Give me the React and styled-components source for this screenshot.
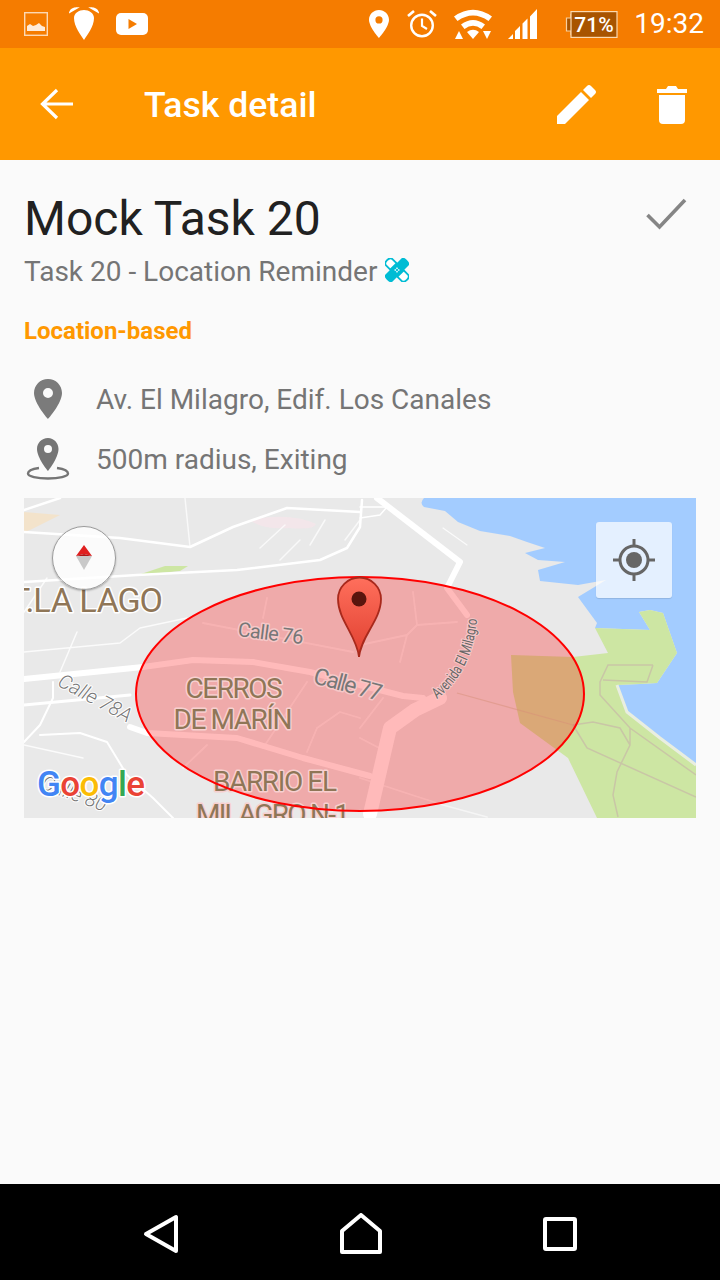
import React from "react";
import styled, { createGlobalStyle } from "styled-components";

const Global = createGlobalStyle`
  html, body { margin: 0; padding: 0; background: #fafafa; }
  * { box-sizing: border-box; }
  body { font-family: Roboto, "Noto Sans", sans-serif; }
`;

const Screen = styled.div`
  width: 720px; height: 1280px; display: flex; flex-direction: column; overflow: hidden; background: #fafafa;
`;
const StatusBar = styled.div`
  height: 48px; flex: none; background: #f57c00; display: flex; align-items: center; justify-content: space-between; color: #fff;
`;
const StatusGroup = styled.div`
  display: flex; align-items: center; gap: ${p => p.$gap}px; padding: ${p => p.$pad};
`;
const Glyph = styled.svg`
  display: block; flex: none; margin-left: ${p => p.$ml || 0}px;
`;
const Clock = styled.span`
  font-size: 28px; line-height: 48px; margin-left: 16px; letter-spacing: 0;
`;
const Toolbar = styled.header`
  height: 112px; flex: none; background: #ff9800; display: flex; align-items: center; color: #fff; padding: 0 32px 0 40px;
`;
const ToolTitle = styled.h1`
  font-size: 35.6px; font-weight: 500; margin: 4px 0 0 70px; flex: 1; line-height: 1; letter-spacing: 0;
`;
const ToolIcon = styled.svg`
  display: block; flex: none; margin-right: ${p => p.$mr || 0}px;
`;
const Content = styled.main`
  flex: 1; padding: 26px 24px 0; display: flex; flex-direction: column;
`;
const TitleRow = styled.div`
  display: flex; justify-content: space-between; align-items: flex-start; height: 64px;
`;
const Title = styled.h2`
  font-size: 48px; font-weight: 400; line-height: 66px; margin: 0; color: #212121;
`;
const Check = styled.svg`
  display: block; margin: 6px 8px 0 0;
`;
const Subtitle = styled.div`
  display: flex; align-items: center; gap: 8px; height: 40px; margin-top: 1px; font-size: 28px; color: #757575;
`;
const Category = styled.div`
  font-size: 24px; font-weight: 700; color: #ff9800; line-height: 32px; margin-top: 24px;
`;
const InfoRow = styled.div`
  display: flex; align-items: center; height: 60px; font-size: 28px; color: #757575;
  margin-top: ${p => p.$mt || 0}px;
`;
const InfoIcon = styled.div`
  width: 48px; flex: none; display: flex; justify-content: center; margin-right: 24px;
`;
const MapBox = styled.section`
  position: relative; width: 672px; height: 320px; margin-top: 9px; overflow: hidden; background: #e9e9e9;
`;
const MapArt = styled.svg`
  display: block; width: 672px; height: 320px;
  text { font-family: Roboto, sans-serif; paint-order: stroke; stroke-linejoin: round; }
`;
const Compass = styled.div`
  position: absolute; left: 28px; top: 28px; width: 64px; height: 64px; border-radius: 50%;
  background: rgba(255,255,255,.82); border: 1px solid #9b9b9b; box-shadow: 0 1px 2px rgba(0,0,0,.3);
  display: flex; align-items: center; justify-content: center;
`;
const Locate = styled.div`
  position: absolute; left: 572px; top: 24px; width: 76px; height: 76px; border-radius: 3px;
  background: rgba(255,255,255,.7); box-shadow: 0 1px 1px rgba(0,0,0,.12);
  display: flex; align-items: center; justify-content: center;
`;
const NavBar = styled.nav`
  height: 96px; flex: none; background: #000; display: flex; align-items: center; justify-content: center; gap: 161px; padding-top: 4px;
`;

const PIN = "M12 2C8.1 2 5 5.1 5 9c0 5.2 7 13 7 13s7-7.8 7-13c0-3.9-3.1-7-7-7zm0 9.5A2.5 2.5 0 1 1 12 6.5a2.5 2.5 0 0 1 0 5z";

const road = (d, w = 3, o = 1) => <path key={d} d={d} fill="none" stroke="#fff" strokeWidth={w} strokeOpacity={o} strokeLinejoin="round" strokeLinecap="round" />;

const MapDrawing = () => (
  <MapArt viewBox="24 498 672 320">
    <rect x="24" y="498" width="672" height="320" fill="#e9e9e9" />
    <path d="M24 512L60 515L30 530L24 532Z" fill="#f3e3cb" />
    <path d="M250 520Q290 512 316 524Q314 530 290 528Q262 530 250 520Z" fill="#f3e6ea" />
    <path d="M138 575L165 566H188L180 571Z" fill="#cde6a3" />
    <path d="M424 498Q419 503 424 507L445 511L458 522L480 531L510 536L527 542L545 548L525 553L538 560L565 562L538 570L540 581L578 585L606 580L578 597L597 623L595 628L650 630L639 612L650 610L663 613L677 653L657 683L640 684L617 685L627 712L660 738L696 765V498Z" fill="#a3ccff" />
    <path d="M595 628L650 630L639 612L650 610L663 613L677 653L657 683L640 684L617 685L627 712L660 738L696 765V818H597L568 758L520 723L513 692L511 655L573 657L608 653Z" fill="#cde6a3" />
    <path d="M653 665L608 665L600 682V695L630 728L696 775M653 665L647 682L603 680M630 728V745L617 772L613 795L618 817M573 725L587 748L696 797M573 725L593 722L620 728L630 745" fill="none" stroke="#c9c6a6" strokeWidth="1.500" />
    <path d="M457 693L573 725" fill="none" stroke="#c9c6a6" strokeWidth="1.200" strokeOpacity="0.5" />
    <path d="M617 685L627 712L660 738L696 765" fill="none" stroke="#e9eee0" strokeWidth="3" />
    {road("M24 679L143 667L193 660L253 662L310 672L360 685L403 696L423 698", 6)}
    {road("M24 705L130 695", 3)}
    {road("M130 727L147 733L237 738L303 758L370 776", 6)}
    {road("M370 814L390 728L415 710L440 698", 14)}
    {road("M377 498L460 562L447 588L467 615", 6)}
    {road("M24 532L120 538L190 547L233 527L287 508L360 512", 2.500)}
    {road("M24 510L60 498", 2.500)}
    {road("M24 582L137 575L237 570L320 560L347 548L360 527L362 500", 2.500)}
    {road("M360 518L380 515L387 507L360 507", 1.500)}
    {road("M77 632L60 672M24 612L47 578M24 652L120 643L140 628L187 618", 1.500, 0.8)}
    {road("M53 682V698L40 725L24 742", 2)}
    {road("M40 735L80 733L107 742L127 775L153 798L173 818", 2)}
    {road("M24 745L83 758", 1.500, 0.8)}
    {road("M190 547L185 498M260 548L285 525M280 560L300 540M310 545L325 520M345 540L360 520", 1.500, 0.7)}
    {road("M443 528L467 545", 1.200, 0.8)}
    {road("M267 598L263 618M203 623L353 652M307 682L263 748M317 728L340 712L360 718M307 752L317 728M207 745L183 768", 1.800, 0.55)}
    {road("M360 645L407 635L417 625L457 622M407 635L400 662M417 625L413 592M360 738L383 750M360 778L443 805L487 817M383 698L360 728", 1.800, 0.55)}
    <text x="10" y="612" fontSize="34" fill="#8f7657" stroke="#fff" strokeWidth="3" textLength="153">T.LA LAGO</text>
    <text x="92" y="704" fontSize="20" fontWeight="300" fill="#777" stroke="#fff" strokeWidth="2" textAnchor="middle" transform="rotate(28 92 704)" fontStyle="italic">Calle 78A</text>
    <text x="72" y="800" fontSize="20" fontWeight="300" fill="#777" stroke="#fff" strokeWidth="2" textAnchor="middle" transform="rotate(20 72 800)" fontStyle="italic">Calle 80</text>
    <ellipse cx="360" cy="694" rx="224" ry="117" fill="#ff0000" fillOpacity="0.27" />
    <text x="270" y="640" fontSize="20" fill="#777" stroke="#f6c8c8" strokeWidth="3" textAnchor="middle" transform="rotate(7 270 640)" textLength="66">Calle 76</text>
    <text x="346" y="692" fontSize="23" fill="#777" stroke="#f6c8c8" strokeWidth="3" textAnchor="middle" transform="rotate(15 346 692)" textLength="70">Calle 77</text>
    <path id="ave" d="M437 699Q472 672 477 620" fill="none" />
    <text fontSize="15" fill="#666" stroke="#f6c8c8" strokeWidth="2.500"><textPath href="#ave" textLength="92" lengthAdjust="spacingAndGlyphs">Avenida El Milagro</textPath></text>
    <text x="234" y="698" fontSize="28" fill="#8f7657" stroke="#f8d0d0" strokeWidth="3" textAnchor="middle" textLength="97">CERROS</text>
    <text x="233" y="729" fontSize="28" fill="#8f7657" stroke="#f8d0d0" strokeWidth="3" textAnchor="middle" textLength="119">DE MARÍN</text>
    <text x="275" y="791" fontSize="28" fill="#8f7657" stroke="#f8d0d0" strokeWidth="3" textAnchor="middle" textLength="124">BARRIO EL</text>
    <text x="273" y="824" fontSize="28" fill="#8f7657" stroke="#f8d0d0" strokeWidth="3" textAnchor="middle" textLength="154">MILAGRO N-1</text>
    <ellipse cx="360" cy="694" rx="224" ry="117" fill="none" stroke="#f00" strokeWidth="2" />
    <defs>
      <linearGradient id="pinfill" x1="0" y1="0" x2="0" y2="1">
        <stop offset="0" stopColor="#ff6f5c" />
        <stop offset="1" stopColor="#e04030" />
      </linearGradient>
    </defs>
    <path d="M359 657C357 636 338 620 338 599A21.500 21.500 0 0 1 381 599C381 620 361 636 359 657Z" fill="url(#pinfill)" stroke="#a8291c" strokeWidth="1.800" />
    <circle cx="359" cy="599" r="7.500" fill="#5a150d" />
    <text x="37" y="796" fontSize="35" fontWeight="500" stroke="#fff" strokeWidth="3" textLength="108">
      <tspan fill="#4285f4">G</tspan><tspan fill="#ea4335">o</tspan><tspan fill="#fbbc05">o</tspan><tspan fill="#4285f4">g</tspan><tspan fill="#34a853">l</tspan><tspan fill="#ea4335">e</tspan>
    </text>
  </MapArt>
);

export default function App() {
  return (
    <Screen>
      <Global />
      <StatusBar>
        <StatusGroup $gap={21} $pad="0 0 0 24px">
          <Glyph width="24" height="24" viewBox="0 0 24 24">
            <rect x="0.700" y="0.700" width="22.600" height="22.600" fill="none" stroke="#fff" strokeOpacity=".7" strokeWidth="1.400" />
            <path d="M3 19V14L6 12L9 14L12 13L15 11L18 14L21 15V19Z" fill="#fff" fillOpacity=".85" />
          </Glyph>
          <Glyph width="30" height="34" viewBox="0 0 30 34">
            <path d="M15 33C12 28 5 20 5 11C5 6 10 3 15 3S25 6 25 11C25 20 18 28 15 33Z" fill="#fff" />
            <path d="M1 5C2 2 5 1 8 1L1 5ZM29 5C28 2 25 1 22 1L29 5Z" fill="#fff" stroke="#fff" strokeWidth="1.500" />
          </Glyph>
          <Glyph $ml={-4} width="32" height="22" viewBox="0 0 32 22">
            <rect x="0" y="0" width="32" height="22" rx="5" fill="#fff" />
            <path d="M12.500 6L21 11L12.500 16Z" fill="#f57c00" />
          </Glyph>
        </StatusGroup>
        <StatusGroup $gap={0} $pad="0 16px 0 0">
          <Glyph width="20" height="28" viewBox="0 0 20 28">
            <path d="M10 0C4.500 0 0 4.300 0 9.800C0 17 10 28 10 28S20 17 20 9.800C20 4.300 15.500 0 10 0ZM10 13.500A3.600 3.600 0 1 1 10 6.300A3.600 3.600 0 0 1 10 13.500Z" fill="#fff" />
          </Glyph>
          <Glyph $ml={18} width="30" height="30" viewBox="0 0 30 30" fill="none" stroke="#fff">
            <circle cx="15" cy="16.500" r="10.800" strokeWidth="2.400" />
            <path d="M15 9.500V17L20 20" strokeWidth="2.200" />
            <path d="M1 7L7 2M29 7L23 2" strokeWidth="2.600" />
          </Glyph>
          <Glyph $ml={16} width="40" height="32" viewBox="0 0 40 32">
            <path d="M1 8.500Q20 -5 39 8.500L35.500 13Q20 2 4.500 13Z" fill="#fff" />
            <path d="M8 16.500Q20 7.500 32 16.500L28.500 21Q20 14.500 11.500 21Z" fill="#fff" />
            <path d="M14 24Q20 19.500 26 24L20 31Z" fill="#fff" />
            <path d="M6 23L10 31H2Z M34 31L30 23H38Z" fill="#fff" />
          </Glyph>
          <Glyph $ml={15} width="30" height="30" viewBox="0 0 30 30">
            <path d="M0 30L5 25V30ZM7 30V22L12 17V30ZM14.500 30V14.500L19.500 9.500V30ZM22 30V7.500L29 0V30Z" fill="#fff" />
          </Glyph>
          <Glyph $ml={27} width="53" height="27" viewBox="0 0 53 27">
            <path d="M6 3V7H1.500V20H6V24" fill="#a85400" stroke="#f8cf9e" strokeWidth="1.200" />
            <rect x="6" y="0.600" width="46" height="25.800" fill="#a85400" stroke="#fbd9b0" strokeWidth="1.200" />
            <text x="29" y="20.500" fontSize="21" fontWeight="500" fill="#fff" textAnchor="middle" fontFamily="Roboto, sans-serif">71%</text>
          </Glyph>
          <Clock>19:32</Clock>
        </StatusGroup>
      </StatusBar>

      <Toolbar>
        <ToolIcon width="34" height="34" viewBox="0 0 34 34" fill="none" stroke="#fff" strokeWidth="3.200">
          <path d="M33 17H3M17 3L2.500 17L17 31" />
        </ToolIcon>
        <ToolTitle>Task detail</ToolTitle>
        <ToolIcon $mr={58} width="42" height="42" viewBox="0 0 42 42">
          <path d="M1 41V33L25 9L33 17L9 41ZM27 7L31 3Q33 1 35 3L39 7Q41 9 39 11L35 15Z" fill="#fff" />
        </ToolIcon>
        <ToolIcon width="32" height="42" viewBox="0 0 32 42">
          <path d="M1 6H10L12 3H20L22 6H31V10H1ZM3 12H29V37Q29 41 25 41H7Q3 41 3 37Z" fill="#fff" />
        </ToolIcon>
      </Toolbar>

      <Content>
        <TitleRow>
          <Title>Mock Task 20</Title>
          <Check width="44" height="44" viewBox="0 0 44 44" fill="none" stroke="#858585" strokeWidth="3.600">
            <path d="M3.500 23L15.500 35L41 8" />
          </Check>
        </TitleRow>
        <Subtitle>
          Task 20 - Location Reminder
          <svg width="24" height="24" viewBox="0 0 24 24" style={{ marginTop: -3 }}>
            <g transform="rotate(-45 12 12)">
              <path d="M7.500 7V1Q7.500 -2 12 -2T16.500 1V7ZM7.500 17H16.500V23Q16.500 26 12 26T7.500 23Z" fill="#fff" stroke="#00bcd4" strokeWidth="1.800" />
              <path d="M0 7H24Q26 7 26 12T24 17H0Q-2 17 -2 12T0 7Z" fill="#00bcd4" />
              <path d="M10 10H11.500V11.500H10ZM12.500 10H14V11.500H12.500ZM10 12.500H11.500V14H10ZM12.500 12.500H14V14H12.500Z" fill="#fff" />
            </g>
          </svg>
        </Subtitle>
        <Category>Location-based</Category>
        <InfoRow $mt={22}>
          <InfoIcon>
            <svg width="48" height="48" viewBox="0 0 24 24"><path d={PIN} fill="#7b7b7b" /></svg>
          </InfoIcon>
          Av. El Milagro, Edif. Los Canales
        </InfoRow>
        <InfoRow>
          <InfoIcon>
            <svg width="44" height="44" viewBox="0 0 44 44" fill="none">
              <path d="M22 1C15.500 1 11 6 11 12C11 21 22 34 22 34S32.500 21 32.500 12C32.500 6 28 1 22 1ZM22 16A4 4 0 1 1 22 8A4 4 0 0 1 22 16Z" fill="#757575" />
              <path d="M13 31C6 32 2 34 2 36.500C2 39.500 11 41.500 22 41.500S42 39.500 42 36.500C42 34 38 32 31 31" stroke="#757575" strokeWidth="2.400" />
            </svg>
          </InfoIcon>
          500m radius, Exiting
        </InfoRow>
        <MapBox>
          <MapDrawing />
          <Compass>
            <svg width="18" height="26" viewBox="0 0 18 26">
              <path d="M1 11L9 0L17 11L9 9Z" fill="#e02020" />
              <path d="M1 11H17L9 25Z" fill="#c9c9c9" />
              <path d="M1 11L9 9L17 11Z" fill="#b01515" />
            </svg>
          </Compass>
          <Locate>
            <svg width="44" height="44" viewBox="0 0 44 44" fill="none" stroke="#666">
              <circle cx="22" cy="22" r="14" strokeWidth="3" />
              <circle cx="22" cy="22" r="8" fill="#666" stroke="none" />
              <path d="M22 1V8M22 36V43M1 22H8M36 22H43" strokeWidth="3" />
            </svg>
          </Locate>
        </MapBox>
      </Content>

      <NavBar>
        <svg width="36" height="40" viewBox="0 0 36 40" fill="none" stroke="#fff" strokeWidth="4" strokeLinejoin="round">
          <path d="M33 3V37L3 20Z" />
        </svg>
        <svg width="42" height="42" viewBox="0 0 42 42" fill="none" stroke="#fff" strokeWidth="4" strokeLinejoin="round">
          <path d="M2 18L21 2L40 18V39H2Z" />
        </svg>
        <svg width="34" height="34" viewBox="0 0 34 34" fill="none" stroke="#fff" strokeWidth="4" strokeLinejoin="round">
          <rect x="2" y="2" width="30" height="30" rx="1" />
        </svg>
      </NavBar>
    </Screen>
  );
}
